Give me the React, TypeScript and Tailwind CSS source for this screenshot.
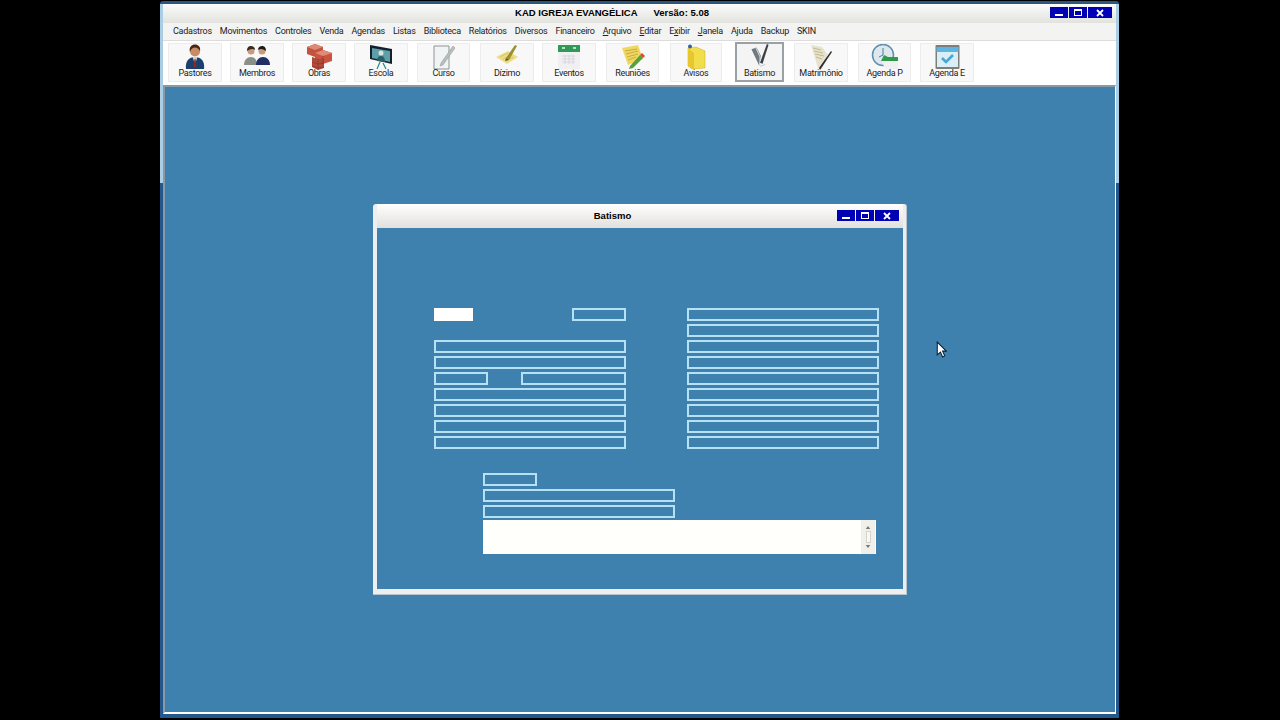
import type { ReactNode } from 'react';

const menus = [
  { label: 'Cadastros' },
  { label: 'Movimentos' },
  { label: 'Controles' },
  { label: 'Venda' },
  { label: 'Agendas' },
  { label: 'Listas' },
  { label: 'Biblioteca' },
  { label: 'Relatórios' },
  { label: 'Diversos' },
  { label: 'Financeiro' },
  { label: 'Arquivo', under: 0 },
  { label: 'Editar', under: 0 },
  { label: 'Exibir', under: 1 },
  { label: 'Janela', under: 0 },
  { label: 'Ajuda' },
  { label: 'Backup' },
  { label: 'SKIN' },
];

function PastorIcon() {
  return (
    <svg viewBox="0 0 20 26" className="h-[26px] w-5">
      <path d="M1 25c-1-8 3-12 9-12s10 4 9 12z" fill="#1d3f6e" />
      <path d="M7.500 13l2.500 7 2.500-7z" fill="#c9d3dc" />
      <path d="M9.500 15h1l1 7-1.500 2-1.500-2z" fill="#8c2a22" />
      <circle cx="10" cy="7.500" r="5" fill="#c98a66" />
      <path d="M5 8C3.500 3 7 0.500 10 0.500s6 2 5 7c-1-3-3-4-5-4s-4 1-5 4.500z" fill="#4a2414" />
    </svg>
  );
}

function MembrosIcon() {
  return (
    <svg viewBox="0 0 26 22" className="h-[22px] w-[26px]">
      <path d="M0 21c0-5 3-8 7-8s6 3 6 8z" fill="#8a9088" />
      <circle cx="7" cy="7" r="3.500" fill="#c99a7c" />
      <path d="M3 7c0-4 2-5 4-5s4 1 4 4c-2-2-5-1-8 1z" fill="#3b2a20" />
      <path d="M12 21c0-5 3-8 7-8s7 3 7 8z" fill="#1f2f66" />
      <circle cx="18" cy="7" r="3.500" fill="#c99a7c" />
      <path d="M14 6c0-3 2-4 4-4s4 1 4 5c-3-2-5-3-8-1z" fill="#1d1a18" />
    </svg>
  );
}

function ObrasIcon() {
  return (
    <svg viewBox="0 0 25 26" className="h-[26px] w-[25px]">
      <path d="M0 3l8-3 8 3v7l-8 3-8-3z" fill="#c2533f" />
      <path d="M0 3l8 3 8-3-8-3z" fill="#de8876" />
      <path d="M8 9l8-3 9 3v8l-9 3-8-3z" fill="#c9543f" />
      <path d="M8 9l8 3 9-3-9-3z" fill="#e08a78" />
      <path d="M5 13l6 2 6-1v10l-6 2-6-3z" fill="#b04a3a" />
      <path d="M5 18l6 2 6-1M5 22l6 2 6-1M16 12v8M11 15v11" stroke="#85332a" strokeWidth="0.600" fill="none" />
    </svg>
  );
}

function EscolaIcon() {
  return (
    <svg viewBox="0 0 24 26" className="h-[26px] w-6">
      <path d="M1 1l22 4v15L1 15z" fill="#14202c" />
      <path d="M3 4l18 3v11L3 14z" fill="#5fa0a8" />
      <circle cx="12" cy="9" r="2.500" fill="#d7e4e0" />
      <path d="M8 17c0-4 2-5 4-5s4 1 4 6z" fill="#2a5f66" />
      <path d="M11 18l-3 7M14 19l3 6" stroke="#1e8f7a" strokeWidth="1.200" />
    </svg>
  );
}

function CursoIcon() {
  return (
    <svg viewBox="0 0 24 26" className="h-[26px] w-6">
      <path d="M2 2h15v23H2z" fill="#f0f4f4" stroke="#8b9692" strokeWidth="1" />
      <path d="M9 19L21 2l2 2L11 21l-3 1z" fill="#b8bebe" stroke="#8c9494" strokeWidth="0.500" />
    </svg>
  );
}

function DizimoIcon() {
  return (
    <svg viewBox="0 0 24 22" className="h-[22px] w-6">
      <path d="M1 13l12-6 10 6-11 7z" fill="#eedc86" />
      <path d="M5 13l8-4M8 15l8-4M11 17l7-4" stroke="#c8b050" strokeWidth="0.600" />
      <path d="M11 14L20 1l2 1-8 14z" fill="#9a9030" />
      <path d="M11 14l3 2-4 1z" fill="#5f5a20" />
    </svg>
  );
}

function EventosIcon() {
  return (
    <svg viewBox="0 0 24 26" className="h-[26px] w-6">
      <path d="M1 8h22v17H1z" fill="#f0f0f2" />
      <path d="M1 1h22v7H1z" fill="#2f9a58" />
      <path d="M5 4h3M16 4h3" stroke="#e8f4ec" strokeWidth="1.500" />
      <path d="M5 12h13M5 15h13M5 18h13M8 11v9M12 11v9M16 11v9" stroke="#cfcfd8" strokeWidth="0.700" />
    </svg>
  );
}

function ReunioesIcon() {
  return (
    <svg viewBox="0 0 24 26" className="h-[26px] w-6">
      <path d="M1 4l16-3 5 14-15 6z" fill="#f0d860" />
      <path d="M4 7l12-2M5 10l12-3M6 13l11-3M7 16l8-3" stroke="#b09a30" strokeWidth="0.700" />
      <path d="M9 22l10-11 3 3-10 10-4 1z" fill="#58a03c" />
      <path d="M19 11l2-2 3 3-2 2z" fill="#d8483c" />
    </svg>
  );
}

function AvisosIcon() {
  return (
    <svg viewBox="0 0 20 26" className="h-[26px] w-5">
      <path d="M2 4l8-1 9 4v17l-13 1-4-3z" fill="#f2de4a" stroke="#c9ae20" strokeWidth="0.500" />
      <path d="M2 4l6 5v16l-2 0-4-3z" fill="#e8c72e" />
      <circle cx="4" cy="2.500" r="2" fill="#2f5fa8" />
    </svg>
  );
}

function BatismoIcon() {
  return (
    <svg viewBox="0 0 22 28" className="h-7 w-[22px]">
      <path d="M1 6l6-2 5 10-2 11z" fill="#707a80" />
      <path d="M6 4l5 11v9" stroke="#e8ecee" strokeWidth="1" fill="none" />
      <path d="M11 22L19 0l2 1-7 22z" fill="#3c4246" />
      <path d="M11 26l6-2" stroke="#b4b8ba" strokeWidth="0.800" />
    </svg>
  );
}

function MatrimonioIcon() {
  return (
    <svg viewBox="0 0 24 26" className="h-[26px] w-6">
      <path d="M2 1l11 2 6 8-6 14-4-1z" fill="#e6e2cc" />
      <path d="M4 4l8 2M5 7l9 2M6 10l9 2M7 13l6 2" stroke="#b0a878" strokeWidth="0.700" />
      <path d="M10 24L22 7l1 1-12 18z" fill="#2c2c2c" />
    </svg>
  );
}

function AgendaPIcon() {
  return (
    <svg viewBox="0 0 28 26" className="h-[26px] w-7">
      <circle cx="12" cy="11" r="10.500" fill="#dce8ee" stroke="#5e8fae" strokeWidth="1.500" />
      <path d="M12 4v7l-4 2" stroke="#4c7c98" strokeWidth="1" fill="none" />
      <path d="M10 15h17v10H14z" fill="#f1f1f1" />
      <path d="M13 11l4 2h10v4H10z" fill="#2f9a48" />
    </svg>
  );
}

function AgendaEIcon() {
  return (
    <svg viewBox="0 0 25 26" className="h-[26px] w-[25px]">
      <rect x="0.500" y="1" width="24" height="24" rx="1" fill="#7f7f7a" />
      <rect x="1.500" y="3" width="22" height="5" fill="#5eb6e0" />
      <rect x="2" y="8" width="21" height="15" fill="#d9eef6" />
      <path d="M7 14l4 4 7-7" stroke="#43a8d8" strokeWidth="2.600" fill="none" />
    </svg>
  );
}

const tools: { label: string; icon: ReactNode; cls: string }[] = [
  { label: 'Pastores', icon: <PastorIcon />, cls: 'ml-[5px] w-[54px]' },
  { label: 'Membros', icon: <MembrosIcon />, cls: 'ml-2 w-[54px]' },
  { label: 'Obras', icon: <ObrasIcon />, cls: 'ml-2 w-[54px]' },
  { label: 'Escola', icon: <EscolaIcon />, cls: 'ml-2 w-[54px]' },
  { label: 'Curso', icon: <CursoIcon />, cls: 'ml-[9px] w-[53px]' },
  { label: 'Dízimo', icon: <DizimoIcon />, cls: 'ml-[10px] w-[54px]' },
  { label: 'Eventos', icon: <EventosIcon />, cls: 'ml-2 w-[54px]' },
  { label: 'Reuniões', icon: <ReunioesIcon />, cls: 'ml-[10px] w-[53px]' },
  { label: 'Avisos', icon: <AvisosIcon />, cls: 'ml-[11px] w-[52px]' },
];

const tools2: { label: string; icon: ReactNode; cls: string }[] = [
  { label: 'Matrimônio', icon: <MatrimonioIcon />, cls: 'ml-[10px] w-[54px]' },
  { label: 'Agenda P', icon: <AgendaPIcon />, cls: 'ml-[10px] w-[53px]' },
  { label: 'Agenda E', icon: <AgendaEIcon />, cls: 'ml-[9px] w-[54px]' },
];

function ToolButton({ label, icon, cls }: { label: string; icon: ReactNode; cls: string }) {
  return (
    <div className={`flex h-[39px] shrink-0 flex-col items-center justify-between border border-[#ececec] bg-[#f8f8f8] pb-[2px] ${cls}`}>
      <div className="flex h-6 items-start justify-center">{icon}</div>
      <span className="font-['Roboto',sans-serif] text-[9px] leading-[11px] tracking-[-0.3px] text-[#222]">{label}</span>
    </div>
  );
}

// blue caption buttons, used on the main window and the child window
function CaptionButtons({ cls }: { cls: string }) {
  return (
    <div className={`flex h-[11px] gap-px ${cls}`}>
      <div className="relative h-[11px] w-[18px] bg-[#0000b4]">
        <div className="absolute bottom-[2px] left-[5px] h-[2px] w-[8px] bg-white" />
      </div>
      <div className="flex h-[11px] w-[18px] items-center justify-center bg-[#0000b4]">
        <div className="h-[7px] w-[8px] border border-t-2 border-white" />
      </div>
      <div className="flex h-[11px] w-[24px] items-center justify-center bg-[#0000b4]">
        <svg viewBox="0 0 8 8" className="h-2 w-2">
          <path d="M1 1l6 6M7 1L1 7" stroke="#fff" strokeWidth="1.800" />
        </svg>
      </div>
    </div>
  );
}

function Field({ cls = 'w-full' }: { cls?: string }) {
  return <div className={`h-[13px] border-2 border-[#b4e2f4] ${cls}`} />;
}

export default function App() {
  return (
    <div className="h-[720px] w-[1280px] overflow-hidden bg-black pt-px pl-[160px] font-['Liberation_Sans',sans-serif]">
      <div className="flex h-[717px] w-[959px] flex-col rounded-t-[3px] bg-[linear-gradient(#2c5580_3px,#a9cde4_3px,#a9cde4_182px,#24588c_182px)] pt-[3px] pr-[3px] pb-[4px] pl-[3px]">
        <div className="relative flex h-[19px] shrink-0 items-center justify-center bg-gradient-to-b from-[#fbfbfa] to-[#e2e2de] pr-[55px]">
          <span className="text-[9.500px] font-bold text-black">
            KAD IGREJA EVANGÉLICA<span className="ml-4">Versão: 5.08</span>
          </span>
          <CaptionButtons cls="absolute top-[3px] right-[4px]" />
        </div>
        <div className="flex h-[17px] shrink-0 items-center gap-[8px] bg-[#f3f3f1] pl-[10px] font-['Roboto',sans-serif] text-[9px] tracking-[-0.25px] text-[#222]">
          {menus.map(m => (
            <span key={m.label} className="whitespace-pre">
              {m.under === undefined ? m.label : (
                <>
                  {m.label.slice(0, m.under)}
                  <span className="underline">{m.label[m.under]}</span>
                  {m.label.slice(m.under + 1)}
                </>
              )}
            </span>
          ))}
        </div>
        <div className="flex h-[45px] shrink-0 items-center border-t border-[#dcdcdc] bg-white pb-[2px]">
          {tools.map(t => <ToolButton key={t.label} label={t.label} icon={t.icon} cls={t.cls} />)}
          <div className="ml-[13px] flex h-[40px] w-[49px] shrink-0 flex-col items-center justify-between border-2 border-[#9aa0a4] bg-[#f4f4f4] pb-px">
            <BatismoIcon />
            <span className="font-['Roboto',sans-serif] text-[9px] leading-[11px] tracking-[-0.3px] text-[#222]">Batismo</span>
          </div>
          {tools2.map(t => <ToolButton key={t.label} label={t.label} icon={t.icon} cls={t.cls} />)}
        </div>
        <div className="relative min-h-0 flex-1 border-t-2 border-r border-b-2 border-l-2 border-t-[#8a9aa4] border-r-white border-b-white border-l-[#8a9aa4] bg-[#3f81ae]">
          {/* child window sits free on the MDI desktop */}
          <div className="absolute top-[117px] left-[208px] flex h-[391px] w-[534px] flex-col rounded-t-[3px] border-r border-b border-[#b8c4cc] bg-[#eceef0] pr-[3px] pb-[5px] pl-[4px]">
            <div className="relative flex h-[24px] shrink-0 items-center justify-center bg-gradient-to-b from-[#ffffff] to-[#e2e0dc] pr-[55px]">
              <span className="text-[9.500px] font-bold text-black">Batismo</span>
              <CaptionButtons cls="absolute top-[6px] right-[4px]" />
            </div>
            <div className="min-h-0 flex-1 bg-[#3f81ae] pt-[80px] pl-[57px]">
              <div className="flex gap-[61px]">
                <div className="flex w-[192px] flex-col gap-[3px]">
                  <div className="flex justify-between">
                    <div className="h-[13px] w-[39px] bg-white" />
                    <Field cls="w-[54px]" />
                  </div>
                  <div className="h-[13px]" />
                  <Field />
                  <Field />
                  <div className="flex justify-between">
                    <Field cls="w-[54px]" />
                    <Field cls="w-[105px]" />
                  </div>
                  <Field />
                  <Field />
                  <Field />
                  <Field />
                </div>
                <div className="flex w-[192px] flex-col gap-[3px]">
                  <Field />
                  <Field />
                  <Field />
                  <Field />
                  <Field />
                  <Field />
                  <Field />
                  <Field />
                  <Field />
                </div>
              </div>
              <div className="mt-6 ml-[49px] flex flex-col gap-[3px]">
                <Field cls="w-[54px]" />
                <Field cls="w-[192px]" />
                <Field cls="w-[192px]" />
                <div className="-mt-px flex h-[34px] w-[393px] justify-end bg-[#fffffb] pr-px">
                  <div className="flex w-[14px] flex-col items-center justify-center gap-[2px] bg-[#f0efea] py-[3px]">
                    <svg viewBox="0 0 6 4" className="h-[3px] w-[6px]"><path d="M3 0l3 4H0z" fill="#777" /></svg>
                    <div className="h-[12px] w-[5px] border border-[#d4d4cf] bg-[#f8f8f6]" />
                    <svg viewBox="0 0 6 4" className="h-[3px] w-[6px]"><path d="M3 4L0 0h6z" fill="#777" /></svg>
                  </div>
                </div>
              </div>
            </div>
          </div>
          {/* mouse pointer */}
          <svg viewBox="0 0 10 16" className="absolute top-[254px] left-[771px] h-[17px] w-[11px]">
            <path d="M1 1v12l3-2.500 2 4.500 2-1-2-4.500h3.500z" fill="#fff" stroke="#0b2233" strokeWidth="1" />
          </svg>
        </div>
      </div>
    </div>
  );
}
